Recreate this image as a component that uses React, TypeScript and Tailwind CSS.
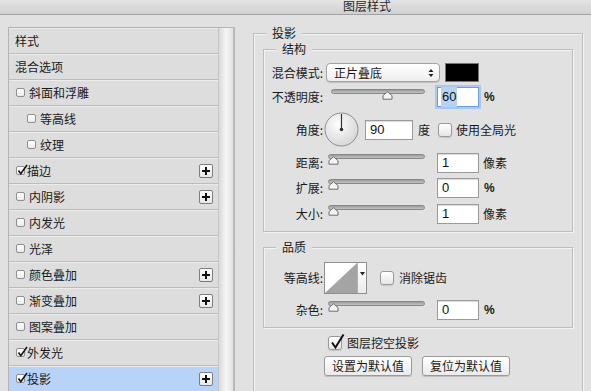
import React from "react";

const cjk = "font-['Noto_Sans_CJK_SC','Liberation_Sans',sans-serif]";
const num = "font-['Liberation_Sans','Noto_Sans_CJK_SC',sans-serif]";

function SmallCheck({ checked }: { checked?: boolean }) {
  return (
    <span className="relative inline-block w-[9px] h-[9px] shrink-0 rounded-[2px] border border-[#8f8f8f] bg-gradient-to-b from-white to-[#ececec]">
      {checked && (
        <svg className="absolute left-[0px] top-[-3px]" width="11" height="12" viewBox="0 0 11 12">
          <path d="M1.5 6.5 L3.8 9.8 L10 1" fill="none" stroke="#111" strokeWidth="1.5" />
        </svg>
      )}
    </span>
  );
}

function BigCheck({ checked }: { checked?: boolean }) {
  return (
    <span className="relative inline-block w-[14px] h-[14px] shrink-0 rounded-[3px] border border-[#9a9a9a] bg-gradient-to-b from-white to-[#e6e6e6] shadow-[0_1px_1px_rgba(0,0,0,0.12)]">
      {checked && (
        <svg className="absolute left-[1px] top-[-4px]" width="15" height="17" viewBox="0 0 15 17">
          <path d="M2 9.5 L5.5 14.5 L13.5 1.5" fill="none" stroke="#111" strokeWidth="2" />
        </svg>
      )}
    </span>
  );
}

function PlusBtn() {
  return (
    <span className="ml-auto mr-[5px] w-[14px] h-[14px] rounded-[2px] border border-[#7d7d7d] bg-gradient-to-b from-white to-[#e8e8e8] flex items-center justify-center">
      <svg width="10" height="10" viewBox="0 0 10 10">
        <path d="M5 1V9M1 5H9" stroke="#111" strokeWidth="2" />
      </svg>
    </span>
  );
}

type Row = {
  label: string;
  cb?: boolean;
  checked?: boolean;
  indent?: boolean;
  plus?: boolean;
  selected?: boolean;
};

const rows: Row[] = [
  { label: "样式" },
  { label: "混合选项" },
  { label: "斜面和浮雕", cb: true },
  { label: "等高线", cb: true, indent: true },
  { label: "纹理", cb: true, indent: true },
  { label: "描边", cb: true, checked: true, plus: true },
  { label: "内阴影", cb: true, plus: true },
  { label: "内发光", cb: true },
  { label: "光泽", cb: true },
  { label: "颜色叠加", cb: true, plus: true },
  { label: "渐变叠加", cb: true, plus: true },
  { label: "图案叠加", cb: true },
  { label: "外发光", cb: true, checked: true },
  { label: "投影", cb: true, checked: true, plus: true, selected: true },
];

function Slider({ width, thumb }: { width: number; thumb: number }) {
  return (
    <div className="relative h-[13px] shrink-0" style={{ width }}>
      <div className="absolute left-0 right-0 top-0 h-[5px] rounded-full border border-[#878787] bg-gradient-to-b from-[#9c9c9c] to-[#c4c4c4]" />
      <svg className="absolute top-[2px]" style={{ left: thumb }} width="11" height="9" viewBox="0 0 11 9">
        <path d="M1 8.2 L1 4.6 L5.5 0.8 L10 4.6 L10 8.2 Z" fill="#f4f4f4" stroke="#6f6f6f" strokeWidth="1" />
      </svg>
    </div>
  );
}

function NumInput({ value, w = 42, focus, selected }: { value: string; w?: number; focus?: boolean; selected?: boolean }) {
  return (
    <div
      className={`h-[20px] shrink-0 bg-white flex items-center pl-[3px] ${num} text-[13px] text-[#111] ${
        focus
          ? "border border-[#6d9fe0] shadow-[0_0_0_2px_#a9c8f0]"
          : "border border-[#9a9a9a] shadow-[inset_0_1px_1px_rgba(0,0,0,0.15)]"
      }`}
      style={{ width: w }}
    >
      <span className={selected ? "bg-[#b4d3f7] px-[1px]" : "px-[1px]"}>{value}</span>
    </div>
  );
}

function Label({ text, w = 59 }: { text: string; w?: number }) {
  return (
    <span className="shrink-0 text-right text-[12px] text-[#1a1a1a]" style={{ width: w }}>
      {text}
    </span>
  );
}

function Group({ title, children, className }: { title: string; children: React.ReactNode; className?: string }) {
  return (
    <div className={`relative border border-[#bdbdbd] shadow-[inset_1px_1px_0_#f3f3f3,1px_1px_0_#f3f3f3] ${className ?? ""}`}>
      <span className="absolute left-[12px] top-[-10px] px-[6px] bg-[#e1e1e1] text-[12px] leading-[18px] text-[#1a1a1a]">
        {title}
      </span>
      {children}
    </div>
  );
}

function Dial() {
  return (
    <svg width="35" height="35" viewBox="0 0 35 35" className="shrink-0">
      <defs>
        <radialGradient id="dg" cx="40%" cy="35%" r="70%">
          <stop offset="0%" stopColor="#ffffff" />
          <stop offset="100%" stopColor="#d4d4d4" />
        </radialGradient>
      </defs>
      <circle cx="17.5" cy="17.5" r="16.5" fill="url(#dg)" stroke="#8e8e8e" strokeWidth="1" />
      <line x1="17.5" y1="17.5" x2="17.5" y2="2" stroke="#333" strokeWidth="1.2" />
      <circle cx="17.5" cy="17.5" r="1.8" fill="#333" />
    </svg>
  );
}

export default function App() {
  return (
    <div className={`w-[591px] h-[391px] overflow-hidden bg-[#e1e1e1] ${cjk} text-[#1a1a1a]`}>
      {/* title bar */}
      <div className="h-[15px] border-b border-[#a3a3a3] bg-gradient-to-b from-[#e4e4e4] to-[#d0d0d0] overflow-hidden">
        <div className="pl-[343px] -mt-[3px] text-[12px] leading-[18px] text-[#2a2a2a]">图层样式</div>
      </div>

      <div className="flex items-start">
        {/* left list */}
        <div className="ml-[8px] mt-[12px] w-[227px] h-[370px] flex border-t border-l border-r-2 border-[#b4b4b4] border-r-[#b8b8b8] overflow-hidden">
          <div className="w-[210px] flex flex-col">
            {rows.map((r) => (
              <div
                key={r.label}
                className={`h-[26px] shrink-0 flex items-center border-b border-[#bcbcbc] shadow-[inset_0_1px_0_#ececec] text-[12px] ${
                  r.selected ? "bg-[#b7d4f8]" : "bg-[#dddddd]"
                } ${r.cb ? (r.indent ? "pl-[18px]" : "pl-[7px]") : "pl-[6px]"}`}
              >
                {r.cb && <SmallCheck checked={r.checked} />}
                <span className={r.cb ? (r.checked ? "ml-[2px]" : "ml-[4px]") : ""}>{r.label}</span>
                {r.plus && <PlusBtn />}
              </div>
            ))}
          </div>
          <div className="w-[15px] border-l border-[#c6c6c6] bg-gradient-to-r from-[#d9d9d9] via-[#f6f6f6] to-[#e2e2e2]" />
        </div>

        {/* right side */}
        <Group title="投影" className="ml-[18px] mt-[18px] w-[330px] h-[380px]">
          <div className="flex flex-col pl-[9px] pt-[15px]">
            <Group title="结构" className="w-[310px]">
              <div className="flex flex-col pt-[13px] pb-[7px]">
                {/* blend mode */}
                <div className="flex items-center h-[19px]">
                  <Label text="混合模式:" />
                  <div className="ml-[3px] w-[114px] h-[19px] rounded-[4px] border border-[#a2a2a2] bg-gradient-to-b from-white to-[#eeeeee] shadow-[0_1px_1px_rgba(0,0,0,0.15)] flex items-center pl-[7px] pr-[5px] text-[12px]">
                    <span>正片叠底</span>
                    <svg className="ml-auto" width="6" height="10" viewBox="0 0 6 10">
                      <path d="M0.5 4 L3 1 L5.5 4 Z M0.5 6 L3 9 L5.5 6 Z" fill="#222" />
                    </svg>
                  </div>
                  <div className="ml-[5px] w-[34px] h-[19px] bg-black border border-[#777]" />
                </div>
                {/* opacity */}
                <div className="flex items-center h-[20px] mt-[5px]">
                  <Label text="不透明度:" />
                  <div className="ml-[8px] self-start mt-[2px]">
                    <Slider width={94} thumb={51} />
                  </div>
                  <div className="ml-[12px]">
                    <NumInput value="60" focus selected />
                  </div>
                  <span className={`ml-[5px] ${num} text-[12px] font-bold`}>%</span>
                </div>
                {/* angle */}
                <div className="flex items-center h-[35px] mt-[5px]">
                  <Label text="角度:" />
                  <div className="ml-[1px]">
                    <Dial />
                  </div>
                  <div className="ml-[6px]">
                    <NumInput value="90" w={48} />
                  </div>
                  <span className="ml-[5px] text-[12px]">度</span>
                  <div className="ml-[8px] flex items-center">
                    <BigCheck />
                  </div>
                  <span className="ml-[4px] text-[12px]">使用全局光</span>
                </div>
                {[
                  { l: "距离:", v: "1", u: "像素", mt: "mt-[6px]" },
                  { l: "扩展:", v: "0", u: "%", mt: "mt-[5px]" },
                  { l: "大小:", v: "1", u: "像素", mt: "mt-[6px]" },
                ].map((r) => (
                  <div key={r.l} className={`flex items-center h-[20px] ${r.mt}`}>
                    <Label text={r.l} />
                    <div className="ml-[5px] self-start mt-[1px]">
                      <Slider width={97} thumb={0} />
                    </div>
                    <div className="ml-[12px]">
                      <NumInput value={r.v} />
                    </div>
                    <span className={`text-[12px] ${r.u === "%" ? `${num} font-bold ml-[5px]` : "ml-[4px]"}`}>{r.u}</span>
                  </div>
                ))}
              </div>
            </Group>

            <Group title="品质" className="w-[310px] mt-[15px]">
              <div className="flex flex-col pt-[14px] pb-[7px]">
                <div className="flex items-center h-[32px]">
                  <Label text="等高线:" />
                  <div className="ml-[1px] flex h-[32px] border border-[#8f8f8f] bg-white">
                    <svg width="32" height="30" viewBox="0 0 32 30">
                      <rect width="32" height="30" fill="#ffffff" />
                      <polygon points="0,30 32,0 32,30" fill="#a4a4a4" />
                    </svg>
                    <div className="w-[9px] border-l border-[#b0b0b0] bg-gradient-to-b from-white to-[#ececec] flex justify-center pt-[9px]">
                      <svg width="5" height="4" viewBox="0 0 5 4">
                        <path d="M0 0 H5 L2.5 3.5 Z" fill="#222" />
                      </svg>
                    </div>
                  </div>
                  <div className="ml-[13px] flex items-center">
                    <BigCheck />
                  </div>
                  <span className="ml-[5px] text-[12px]">消除锯齿</span>
                </div>
                <div className="flex items-center h-[20px] mt-[6px]">
                  <Label text="杂色:" />
                  <div className="ml-[5px] self-start mt-[1px]">
                    <Slider width={97} thumb={0} />
                  </div>
                  <div className="ml-[12px]">
                    <NumInput value="0" />
                  </div>
                  <span className={`ml-[5px] ${num} text-[12px] font-bold`}>%</span>
                </div>
              </div>
            </Group>

            <div className="flex items-center h-[14px] mt-[8px] pl-[65px]">
              <BigCheck checked />
              <span className="ml-[5px] text-[12px] leading-[14px]">图层挖空投影</span>
            </div>
            <div className="flex items-center mt-[6px] pl-[61px] gap-[10px]">
              <button className="w-[88px] h-[20px] rounded-[3px] border border-[#9a9a9a] bg-gradient-to-b from-white to-[#ebebeb] shadow-[0_1px_1px_rgba(0,0,0,0.15)] text-[12px] leading-[18px]">
                设置为默认值
              </button>
              <button className="w-[88px] h-[20px] rounded-[3px] border border-[#9a9a9a] bg-gradient-to-b from-white to-[#ebebeb] shadow-[0_1px_1px_rgba(0,0,0,0.15)] text-[12px] leading-[18px]">
                复位为默认值
              </button>
            </div>
          </div>
        </Group>
      </div>
    </div>
  );
}
